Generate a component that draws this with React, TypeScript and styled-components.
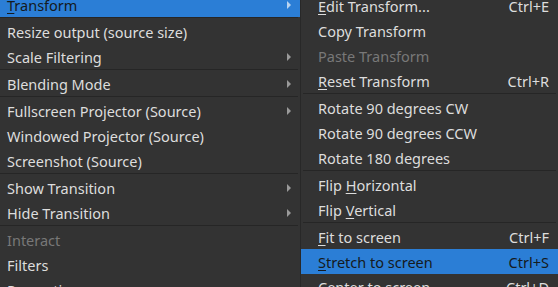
import React from "react"
import styled, { createGlobalStyle } from "styled-components"

const GlobalStyle = createGlobalStyle`
  html, body {
    margin: 0;
    padding: 0;
    background: #333333;
    overflow: hidden;
  }
`

const Desktop = styled.div`
  display: flex;
  flex-direction: row;
  width: 558px;
  height: 287px;
  overflow: hidden;
  background: #333333;
  font-family: "Noto Sans", "DejaVu Sans", sans-serif;
  font-size: 14.5px;
`

interface MenuProps {
  offsetTop: number
}

const Menu = styled.ul<MenuProps>`
  list-style: none;
  margin: ${({ offsetTop }) => `${offsetTop}px 0 0`};
  padding: 0;
  background: #333333;
  display: flex;
  flex-direction: column;
  flex-shrink: 0;
`

const MainMenu = styled(Menu)`
  width: 309px;
  margin-left: -9px;
`

const SubMenu = styled(Menu)`
  flex: 1;
  border-left: 1px solid #282828;
`

interface ItemProps {
  active?: boolean
  disabled?: boolean
  inset: number
}

const Item = styled.li<ItemProps>`
  display: flex;
  align-items: center;
  height: 25px;
  flex-shrink: 0;
  padding: 1px 9px 0 ${({ inset }) => inset}px;
  box-sizing: border-box;
  white-space: nowrap;
  background: ${({ active }) => (active ? "#2b7ed6" : "transparent")};
  color: ${({ active, disabled }) =>
    active ? "#151a20" : disabled ? "#787878" : "#dddddd"};
`

const Label = styled.span`
  flex: 1;
`

const Mnemonic = styled.span`
  text-decoration: underline;
  text-underline-offset: 2px;
`

const Shortcut = styled.span`
  margin-left: 16px;
`

const Separator = styled.li`
  height: 1px;
  flex-shrink: 0;
  margin: 0 2px 1px;
  background: #262626;
`

const Arrow: React.FC<{ active?: boolean }> = ({ active }) => (
  <svg width="4" height="8" viewBox="0 0 4 8">
    <path d="M0 0 L4 4 L0 8 Z" fill={active ? "#b9d3f0" : "#9a9a9a"} />
  </svg>
)

type Entry =
  | "sep"
  | {
      label: string
      key?: number
      shortcut?: string
      arrow?: boolean
      active?: boolean
      disabled?: boolean
    }

const mainEntries: Entry[] = [
  { label: "Transform", key: 0, arrow: true, active: true },
  "sep",
  { label: "Resize output (source size)" },
  { label: "Scale Filtering", arrow: true },
  "sep",
  { label: "Blending Mode", arrow: true },
  "sep",
  { label: "Fullscreen Projector (Source)", arrow: true },
  { label: "Windowed Projector (Source)" },
  { label: "Screenshot (Source)" },
  "sep",
  { label: "Show Transition", arrow: true },
  { label: "Hide Transition", arrow: true },
  "sep",
  { label: "Interact", disabled: true },
  { label: "Filters" },
  { label: "Properties" },
]

const subEntries: Entry[] = [
  { label: "Edit Transform...", key: 0, shortcut: "Ctrl+E" },
  { label: "Copy Transform" },
  { label: "Paste Transform", disabled: true },
  { label: "Reset Transform", key: 0, shortcut: "Ctrl+R" },
  "sep",
  { label: "Rotate 90 degrees CW" },
  { label: "Rotate 90 degrees CCW" },
  { label: "Rotate 180 degrees" },
  "sep",
  { label: "Flip Horizontal", key: 5 },
  { label: "Flip Vertical", key: 5 },
  "sep",
  { label: "Fit to screen", key: 0, shortcut: "Ctrl+F" },
  { label: "Stretch to screen", key: 0, shortcut: "Ctrl+S", active: true },
  { label: "Center to screen", key: 0, shortcut: "Ctrl+D" },
]

const renderLabel = (label: string, key?: number) => {
  if (key === undefined) return label
  return (
    <>
      {label.slice(0, key)}
      <Mnemonic>{label[key]}</Mnemonic>
      {label.slice(key + 1)}
    </>
  )
}

const renderEntries = (entries: Entry[], inset: number) =>
  entries.map((e, i) =>
    e === "sep" ? (
      <Separator key={i} />
    ) : (
      <Item key={i} inset={inset} active={e.active} disabled={e.disabled}>
        <Label>{renderLabel(e.label, e.key)}</Label>
        {e.shortcut && <Shortcut>{e.shortcut}</Shortcut>}
        {e.arrow && <Arrow active={e.active} />}
      </Item>
    )
  )

const App = () => (
  <>
    <GlobalStyle />
    <Desktop>
      <MainMenu offsetTop={-8}>{renderEntries(mainEntries, 16)}</MainMenu>
      <SubMenu offsetTop={-7}>{renderEntries(subEntries, 17)}</SubMenu>
    </Desktop>
  </>
)

export default App
